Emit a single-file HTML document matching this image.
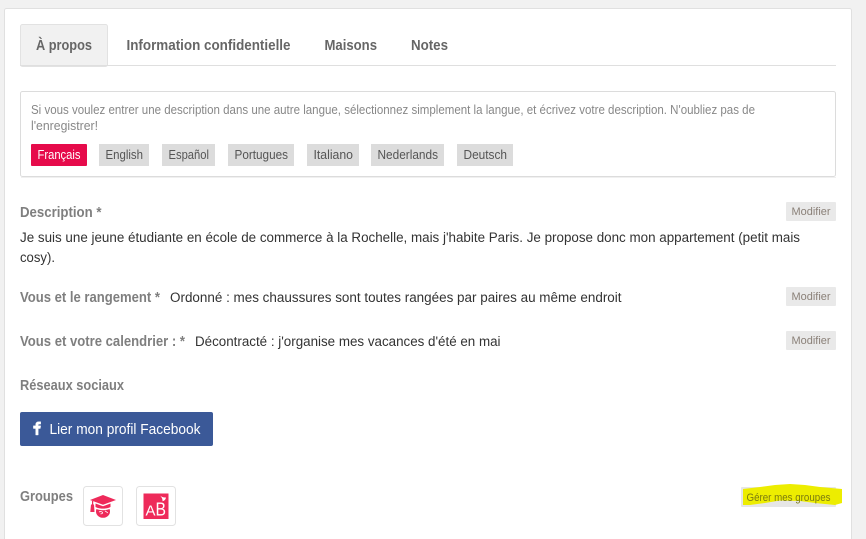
<!DOCTYPE html>
<html lang="fr">
<head>
<meta charset="utf-8">
<title>À propos</title>
<style>
html,body{margin:0;padding:0;width:866px;height:539px;overflow:hidden;background:#f1f1f1}
svg{display:block}
text{font-family:"Liberation Sans",sans-serif;white-space:pre}
.tab{font-size:14.5px;font-weight:700;fill:#666}
.muted{font-size:12.5px;fill:#888}
.lang{font-size:12.5px;fill:#555}
.lbl{font-size:14.5px;font-weight:700;fill:#7f7f7f}
.body{font-size:14.2px;fill:#333}
.mod{font-size:11px;fill:#8a8078}
</style>
</head>
<body>
<svg width="866" height="539" viewBox="0 0 866 539" xmlns="http://www.w3.org/2000/svg">
  <rect x="4.5" y="8.5" width="847" height="540" rx="2" fill="#fff" stroke="#e0e0e0"/>

  <!-- tabs -->
  <rect x="20.5" y="24.5" width="87" height="42" rx="2" fill="#f1f1f1" stroke="#e2e2e2"/>
  <rect x="20" y="65" width="816" height="1" fill="#dfdfdf"/>
  <text class="tab" x="36" y="50" textLength="56" lengthAdjust="spacingAndGlyphs">À propos</text>
  <text class="tab" x="126.5" y="50" textLength="164" lengthAdjust="spacingAndGlyphs">Information confidentielle</text>
  <text class="tab" x="324.5" y="50" textLength="52.5" lengthAdjust="spacingAndGlyphs">Maisons</text>
  <text class="tab" x="411" y="50" textLength="37" lengthAdjust="spacingAndGlyphs">Notes</text>

  <!-- info box -->
  <rect x="20.5" y="91.5" width="815" height="85" rx="2" fill="#fff" stroke="#dcdcdc"/>
  <rect x="21" y="177" width="815" height="1" fill="#f0f0f0"/>
  <text class="muted" x="31" y="114" textLength="724" lengthAdjust="spacingAndGlyphs">Si vous voulez entrer une description dans une autre langue, sélectionnez simplement la langue, et écrivez votre description. N'oubliez pas de</text>
  <text class="muted" x="31" y="130" textLength="67" lengthAdjust="spacingAndGlyphs">l'enregistrer!</text>

  <rect x="31" y="144" width="56" height="22" rx="1" fill="#e60b4b"/>
  <text class="lang" x="37.5" y="159" textLength="43" lengthAdjust="spacingAndGlyphs" style="fill:#fff">Français</text>
  <rect x="99" y="144" width="50" height="22" fill="#dcdcdc"/>
  <text class="lang" x="105.5" y="159" textLength="37.5" lengthAdjust="spacingAndGlyphs">English</text>
  <rect x="162" y="144" width="53" height="22" fill="#dcdcdc"/>
  <text class="lang" x="168.5" y="159" textLength="40.5" lengthAdjust="spacingAndGlyphs">Español</text>
  <rect x="228" y="144" width="66" height="22" fill="#dcdcdc"/>
  <text class="lang" x="234.5" y="159" textLength="53.5" lengthAdjust="spacingAndGlyphs">Portugues</text>
  <rect x="307" y="144" width="52" height="22" fill="#dcdcdc"/>
  <text class="lang" x="313.5" y="159" textLength="39.5" lengthAdjust="spacingAndGlyphs">Italiano</text>
  <rect x="371" y="144" width="73" height="22" fill="#dcdcdc"/>
  <text class="lang" x="377.5" y="159" textLength="60.5" lengthAdjust="spacingAndGlyphs">Nederlands</text>
  <rect x="457" y="144" width="56" height="22" fill="#dcdcdc"/>
  <text class="lang" x="463.5" y="159" textLength="43.5" lengthAdjust="spacingAndGlyphs">Deutsch</text>

  <!-- description -->
  <text class="lbl" x="20" y="217" textLength="81.5" lengthAdjust="spacingAndGlyphs">Description *</text>
  <rect x="786" y="202" width="50" height="19" rx="1" fill="#e9e9e9"/>
  <text class="mod" x="791.5" y="215" textLength="39" lengthAdjust="spacingAndGlyphs">Modifier</text>
  <text class="body" x="20" y="242" textLength="780" lengthAdjust="spacingAndGlyphs">Je suis une jeune étudiante en école de commerce à la Rochelle, mais j'habite Paris. Je propose donc mon appartement (petit mais</text>
  <text class="body" x="20" y="262" textLength="35" lengthAdjust="spacingAndGlyphs">cosy).</text>

  <text class="lbl" x="20" y="302" textLength="140" lengthAdjust="spacingAndGlyphs">Vous et le rangement *</text>
  <text class="body" x="170" y="302" textLength="451.5" lengthAdjust="spacingAndGlyphs">Ordonné : mes chaussures sont toutes rangées par paires au même endroit</text>
  <rect x="786" y="287" width="50" height="19" rx="1" fill="#e9e9e9"/>
  <text class="mod" x="791.5" y="300" textLength="39" lengthAdjust="spacingAndGlyphs">Modifier</text>

  <text class="lbl" x="20" y="346" textLength="165" lengthAdjust="spacingAndGlyphs">Vous et votre calendrier : *</text>
  <text class="body" x="195" y="346" textLength="305.5" lengthAdjust="spacingAndGlyphs">Décontracté : j'organise mes vacances d'été en mai</text>
  <rect x="786" y="331" width="50" height="19" rx="1" fill="#e9e9e9"/>
  <text class="mod" x="791.5" y="344" textLength="39" lengthAdjust="spacingAndGlyphs">Modifier</text>

  <text class="lbl" x="20" y="390" textLength="104" lengthAdjust="spacingAndGlyphs">Réseaux sociaux</text>

  <!-- facebook -->
  <rect x="20" y="412" width="193" height="34" rx="2" fill="#3b5998"/>
  <path d="M35.700 435v-6.500h-2.300v-2.700h2.300v-1.200c0-2.200 1.300-2.900 3.200-2.900h1.800v2.400h-1.200c-1 0-1.300.3-1.300 1.100v.6h2.500l-.4 2.700h-2.100v6.500z" fill="#fff" stroke="#fff" stroke-width=".4"/>
  <text x="49.500" y="434" font-size="14.500" fill="#fff" textLength="151" lengthAdjust="spacingAndGlyphs">Lier mon profil Facebook</text>

  <!-- groupes -->
  <text class="lbl" x="20" y="501" textLength="53" lengthAdjust="spacingAndGlyphs">Groupes</text>
  <rect x="83.500" y="486.500" width="39" height="39" rx="3" fill="#fff" stroke="#e2e2e2"/>
  <rect x="136.500" y="486.500" width="39" height="39" rx="3" fill="#fff" stroke="#e2e2e2"/>

  <!-- cap icon -->
  <g fill="#ee2a5a">
    <path d="M103 495l13 5-13 4.800-13-4.800z"/>
    <path d="M95.500 503.500l7.500 2.800 7.500-2.800v3.500c-2 1.100-4.800 1.600-7.500 1.600s-5.500-.5-7.500-1.600z"/>
    <path d="M96.500 509c1.800.8 4 1.200 6.500 1.200s4.700-.4 6.500-1.200c.4 1 .5 1.600.5 2.500a7 6.300 0 0 1-14 0c0-.9.100-1.500.5-2.500z"/>
    <rect x="92" y="501" width="1.200" height="4"/>
    <path d="M91 504.500h3l.5 7.500h-4.200z"/>
  </g>
  <path d="M99 512c1.500-.8 3-.4 3.500.5s-1 1.500-2 1.300M105 510.800c1 1 2 1.200 2.800 2.200" fill="none" stroke="#fff" stroke-width=".8"/>

  <!-- AB icon -->
  <rect x="143.500" y="493.500" width="25" height="25.500" fill="#ee2a5a"/>
  <text x="145.500" y="515.500" fill="#fff" font-size="14.500" textLength="10" lengthAdjust="spacingAndGlyphs">A</text>
  <text x="155.500" y="515.500" fill="#fff" font-size="18" textLength="10.500" lengthAdjust="spacingAndGlyphs">B</text>
  <path d="M159.500 495c1.700 1.800 3.500 2.600 6.500 2.500-.3 2-1.500 3.300-3.500 3.800.3-2.500-1.200-4.500-3-6.300z" fill="#fff"/>

  <!-- gerer -->
  <rect x="741" y="487" width="95" height="20" rx="1" fill="#e6e6e6"/>
  <path d="M743 489L760 487L775 485L790 484L805 485L820 487L842 489L842 503L835 505L815 503L800 501L780 500.500L765 503L750 505L743 505Z" fill="#eded00"/>
  <text class="mod" x="746.500" y="501" textLength="84" lengthAdjust="spacingAndGlyphs" style="fill:#7b7b10">Gérer mes groupes</text>
</svg>
</body>
</html>
